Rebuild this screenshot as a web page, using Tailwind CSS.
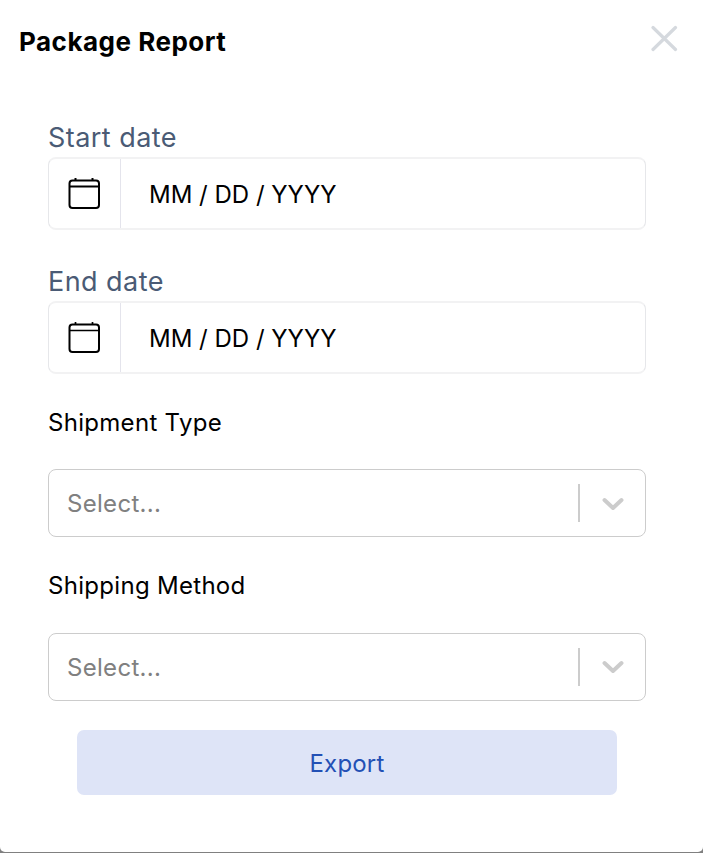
<!DOCTYPE html>
<html lang="en">
<head>
<meta charset="utf-8">
<title>Package Report</title>
<script src="https://cdn.jsdelivr.net/npm/@tailwindcss/browser@4"></script>
</head>
<body class="bg-white font-['Inter',sans-serif] text-black overflow-hidden">
<div class="w-[703px] h-[853px] bg-[#808080]">
<main class="h-[852px] rounded-b-[5px] bg-white flex flex-col">
  <header class="flex justify-between pl-[19px] pr-[25px] h-[121px]">
    <h1 class="mt-[26px] text-[26px] leading-8 font-bold tracking-[0.5px]"><span>Package Report</span></h1>
    <svg class="mt-[25px] w-[27px] h-[27px]" viewBox="0 0 27 27" fill="none" stroke="#d5d9de" stroke-width="3.2" stroke-linecap="round"><path d="M2 2.500 24.500 24.500M24.500 2.500 2 24.500"/></svg>
  </header>
  <form class="px-12 w-[694px] flex flex-col">
    <label class="h-9 leading-[34px] text-[27px] tracking-[0.45px] text-[#4a5b75]"><span>Start date</span></label>
    <div class="flex h-[73px] border-x border-y-2 border-x-[#e6e7ea] border-y-[#f2f2f3] rounded-lg">
      <div class="w-[72px] border-r border-[#e4e4ec] pl-[19px] pt-[19px]">
        <svg class="w-8 h-8" viewBox="0 0 32 32" fill="none" stroke="#000" stroke-width="2"><rect x="1.5" y="2.500" width="29.500" height="27.500" rx="3"/><path d="M1.500 8.500H31M7.500 0V3M24.500 0V3"/></svg>
      </div>
      <div class="pl-7 leading-[72px] text-[24px]"><span>MM / DD / YYYY</span></div>
    </div>
    <label class="mt-[35px] h-9 leading-[34px] text-[27px] tracking-[0.45px] text-[#4a5b75]"><span>End date</span></label>
    <div class="flex h-[73px] border-x border-y-2 border-x-[#e6e7ea] border-y-[#f2f2f3] rounded-lg">
      <div class="w-[72px] border-r border-[#e4e4ec] pl-[19px] pt-[19px]">
        <svg class="w-8 h-8" viewBox="0 0 32 32" fill="none" stroke="#000" stroke-width="2"><rect x="1.5" y="2.500" width="29.500" height="27.500" rx="3"/><path stroke-width="1.700" d="M1.500 8.500H31M7.500 0V3M24.500 0V3"/></svg>
      </div>
      <div class="pl-7 leading-[72px] text-[24px]"><span>MM / DD / YYYY</span></div>
    </div>
    <label class="mt-[33px] h-[62px] leading-8 text-[24px] tracking-[0.3px]"><span>Shipment Type</span></label>
    <div class="flex items-center h-[68px] border border-[#ccc] rounded-lg pl-[18px]">
      <span class="grow text-[24px] leading-8 pt-[2px] tracking-[0.3px] text-[#808080]">Select...</span>
      <i class="w-[2px] h-[38px] bg-[#ccc]"></i>
      <svg class="mt-[2px] ml-[22px] mr-[21px] w-[22px] h-[14px]" viewBox="0 0 22 14" fill="none" stroke="#ccc" stroke-width="4" stroke-linecap="round" stroke-linejoin="round"><path d="M2.500 3 11 11 19.500 3"/></svg>
    </div>
    <label class="mt-[33px] h-[63px] leading-8 text-[24px] tracking-[0.3px]"><span>Shipping Method</span></label>
    <div class="flex items-center h-[68px] border border-[#ccc] rounded-lg pl-[18px]">
      <span class="grow text-[24px] leading-8 pt-[2px] tracking-[0.3px] text-[#808080]">Select...</span>
      <i class="w-[2px] h-[38px] bg-[#ccc]"></i>
      <svg class="ml-[22px] mr-[21px] w-[22px] h-[14px]" viewBox="0 0 22 14" fill="none" stroke="#ccc" stroke-width="4" stroke-linecap="round" stroke-linejoin="round"><path d="M2.500 3 11 11 19.500 3"/></svg>
    </div>
    <button type="button" class="mt-[29px] mx-[29px] h-[65px] pt-[3px] rounded-[7px] bg-[#dee4f7] text-[#2350b5] text-[24px] tracking-[0.2px]"><span>Export</span></button>
  </form>
</main>
</div>
</body>
</html>
